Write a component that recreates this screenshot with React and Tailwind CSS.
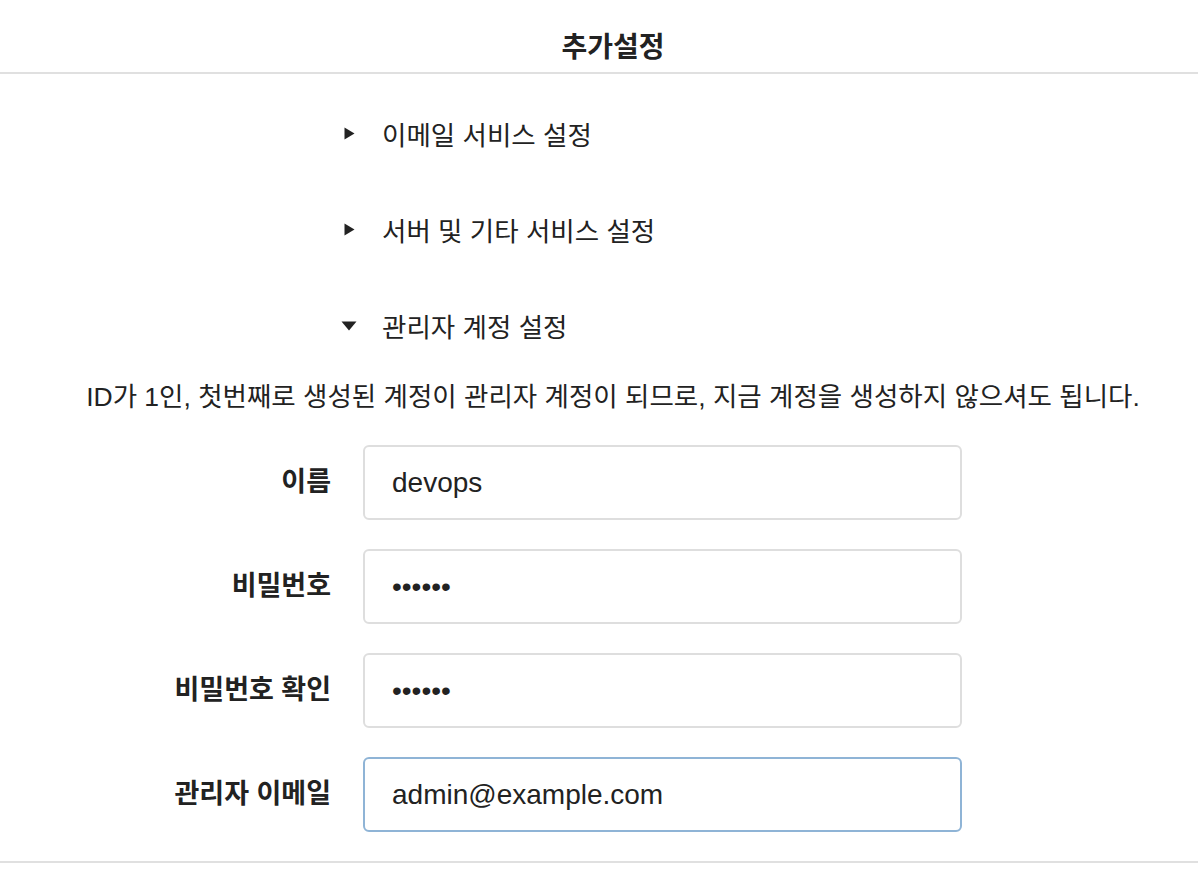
import { useState } from 'react';

const FONT = { fontFamily: '"Liberation Sans", "Noto Sans CJK KR", sans-serif' };

const SECTIONS = ['이메일 서비스 설정', '서버 및 기타 서비스 설정', '관리자 계정 설정'];

function Triangle({ open }) {
  return open ? (
    <svg width="16" height="10" viewBox="0 0 16 10" className="shrink-0 -mt-[5px]">
      <path d="M0.5 0.5h15L8 9.5z" fill="#222" />
    </svg>
  ) : (
    <svg width="11" height="13" viewBox="0 0 11 13" className="shrink-0 ml-[3px] -mt-[5px]">
      <path d="M0.5 0.5v12l10-6z" fill="#222" />
    </svg>
  );
}

function Field({ label, type = 'text', value, focused }) {
  return (
    <div className="flex items-center gap-8">
      <label className="w-[331px] text-right text-[27px] font-bold text-[#222]">{label}</label>
      <input
        type={type}
        defaultValue={value}
        readOnly
        className={`w-[599px] h-[75px] rounded-md border-2 px-[27px] text-[28px] text-[#222] outline-none ${
          focused ? 'border-[#8fb4d6]' : 'border-[#dedede]'
        }`}
        style={FONT}
      />
    </div>
  );
}

export default function App() {
  const [open] = useState(2);

  return (
    <div className="w-[1198px] h-[876px] bg-white text-[#222]" style={FONT}>
      <div className="h-[74px] border-b-2 border-[#e0e0e0] flex items-end justify-center pl-[28px] pb-[3px]">
        <h2 className="text-[28px] leading-[42px] font-bold">추가설정</h2>
      </div>

      <div className="pl-[341px] pt-[41px]">
        {SECTIONS.map((s, i) => (
          <div key={s} className="h-[96px]">
            <div className="h-[42px] flex items-center">
              <div className="w-[41px] flex items-center">
                <Triangle open={i === open} />
              </div>
              <span className="text-[26.5px] leading-[42px]">{s}</span>
            </div>
          </div>
        ))}
      </div>

      <p className="-mt-[26px] pl-[28px] text-center text-[26.5px] leading-[40px]">
        ID가 1인, 첫번째로 생성된 계정이 관리자 계정이 되므로, 지금 계정을 생성하지 않으셔도 됩니다.
      </p>

      <div className="mt-[28px] flex flex-col gap-[29px]">
        <Field label="이름" value="devops" />
        <Field label="비밀번호" type="password" value="123456" />
        <Field label="비밀번호 확인" type="password" value="123456" />
        <Field label="관리자 이메일" value="admin@example.com" focused />
      </div>

      <div className="mt-[29px] border-b-2 border-[#e0e0e0]" />
    </div>
  );
}
